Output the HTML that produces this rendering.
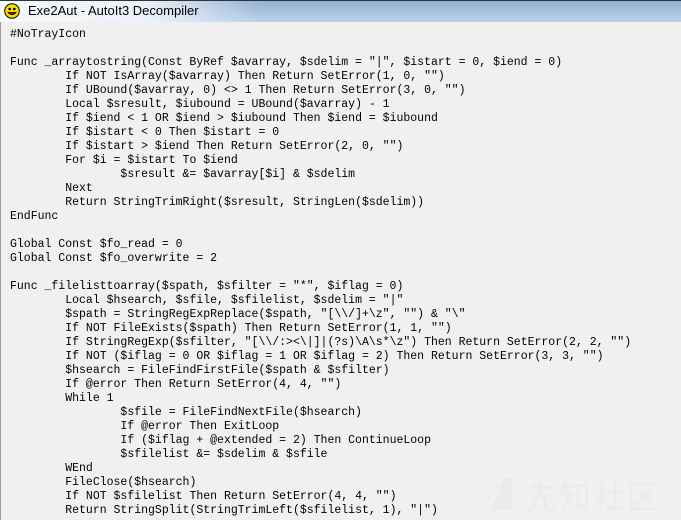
<!DOCTYPE html>
<html><head><meta charset="utf-8"><style>
html,body{margin:0;padding:0;width:681px;height:520px;overflow:hidden;background:#f0f0f0}
#tb{position:absolute;left:0;top:0;width:681px;height:22px;border-top:1px solid #333;box-sizing:border-box;background:linear-gradient(#93b2d1,#bad2eb)}
#glare{position:absolute;left:0;top:1px;width:260px;height:21px;background:linear-gradient(90deg,rgba(245,248,252,1) 0,rgba(240,245,250,.95) 55%,rgba(240,245,250,0) 100%)}
#title{position:absolute;left:28px;top:3px;font:13px "Liberation Sans",sans-serif;color:#000}
#ic{position:absolute;left:4px;top:3px;width:16px;height:16px}
#ct{position:absolute;left:0;top:22px;width:681px;height:498px;border-left:1px solid #a0a0a0;box-sizing:border-box}
pre{position:absolute;left:10px;top:28px;margin:0;font:11.5px/14px "Liberation Mono",monospace;color:#000;tab-size:8;-moz-tab-size:8}
#wm{position:absolute;left:525px;top:472px;font:32px "Noto Sans CJK SC",sans-serif;color:#ebebeb;letter-spacing:2px}
#lg{position:absolute;left:480px;top:472px;width:32px;height:40px}
</style></head><body>
<div id="tb"></div><div id="glare"></div>
<svg id="ic" viewBox="0 0 16 16"><circle cx="8" cy="8" r="7.3" fill="#f7e000" stroke="#000" stroke-width="1"/><circle cx="5.7" cy="6" r="1.3"/><circle cx="10.3" cy="6" r="1.3"/><path d="M4 9.5Q8 14 12 9.5Z" fill="#d00" stroke="#000" stroke-width=".8"/></svg>
<div id="title">Exe2Aut - AutoIt3 Decompiler</div>
<div id="ct"></div>
<svg id="lg" viewBox="0 0 32 40"><path d="M0 38L18 12H20L2 38Z" fill="#ebebeb"/><path d="M24 6H32V38H10Z" fill="#ebebeb"/></svg>
<div id="wm">先知社区</div>
<pre>#NoTrayIcon

Func _arraytostring(Const ByRef $avarray, $sdelim = "|", $istart = 0, $iend = 0)
	If NOT IsArray($avarray) Then Return SetError(1, 0, "")
	If UBound($avarray, 0) &lt;&gt; 1 Then Return SetError(3, 0, "")
	Local $sresult, $iubound = UBound($avarray) - 1
	If $iend &lt; 1 OR $iend &gt; $iubound Then $iend = $iubound
	If $istart &lt; 0 Then $istart = 0
	If $istart &gt; $iend Then Return SetError(2, 0, "")
	For $i = $istart To $iend
		$sresult &amp;= $avarray[$i] &amp; $sdelim
	Next
	Return StringTrimRight($sresult, StringLen($sdelim))
EndFunc

Global Const $fo_read = 0
Global Const $fo_overwrite = 2

Func _filelisttoarray($spath, $sfilter = "*", $iflag = 0)
	Local $hsearch, $sfile, $sfilelist, $sdelim = "|"
	$spath = StringRegExpReplace($spath, "[\\/]+\z", "") &amp; "\"
	If NOT FileExists($spath) Then Return SetError(1, 1, "")
	If StringRegExp($sfilter, "[\\/:&gt;&lt;\|]|(?s)\A\s*\z") Then Return SetError(2, 2, "")
	If NOT ($iflag = 0 OR $iflag = 1 OR $iflag = 2) Then Return SetError(3, 3, "")
	$hsearch = FileFindFirstFile($spath &amp; $sfilter)
	If @error Then Return SetError(4, 4, "")
	While 1
		$sfile = FileFindNextFile($hsearch)
		If @error Then ExitLoop
		If ($iflag + @extended = 2) Then ContinueLoop
		$sfilelist &amp;= $sdelim &amp; $sfile
	WEnd
	FileClose($hsearch)
	If NOT $sfilelist Then Return SetError(4, 4, "")
	Return StringSplit(StringTrimLeft($sfilelist, 1), "|")</pre>
</body></html>
